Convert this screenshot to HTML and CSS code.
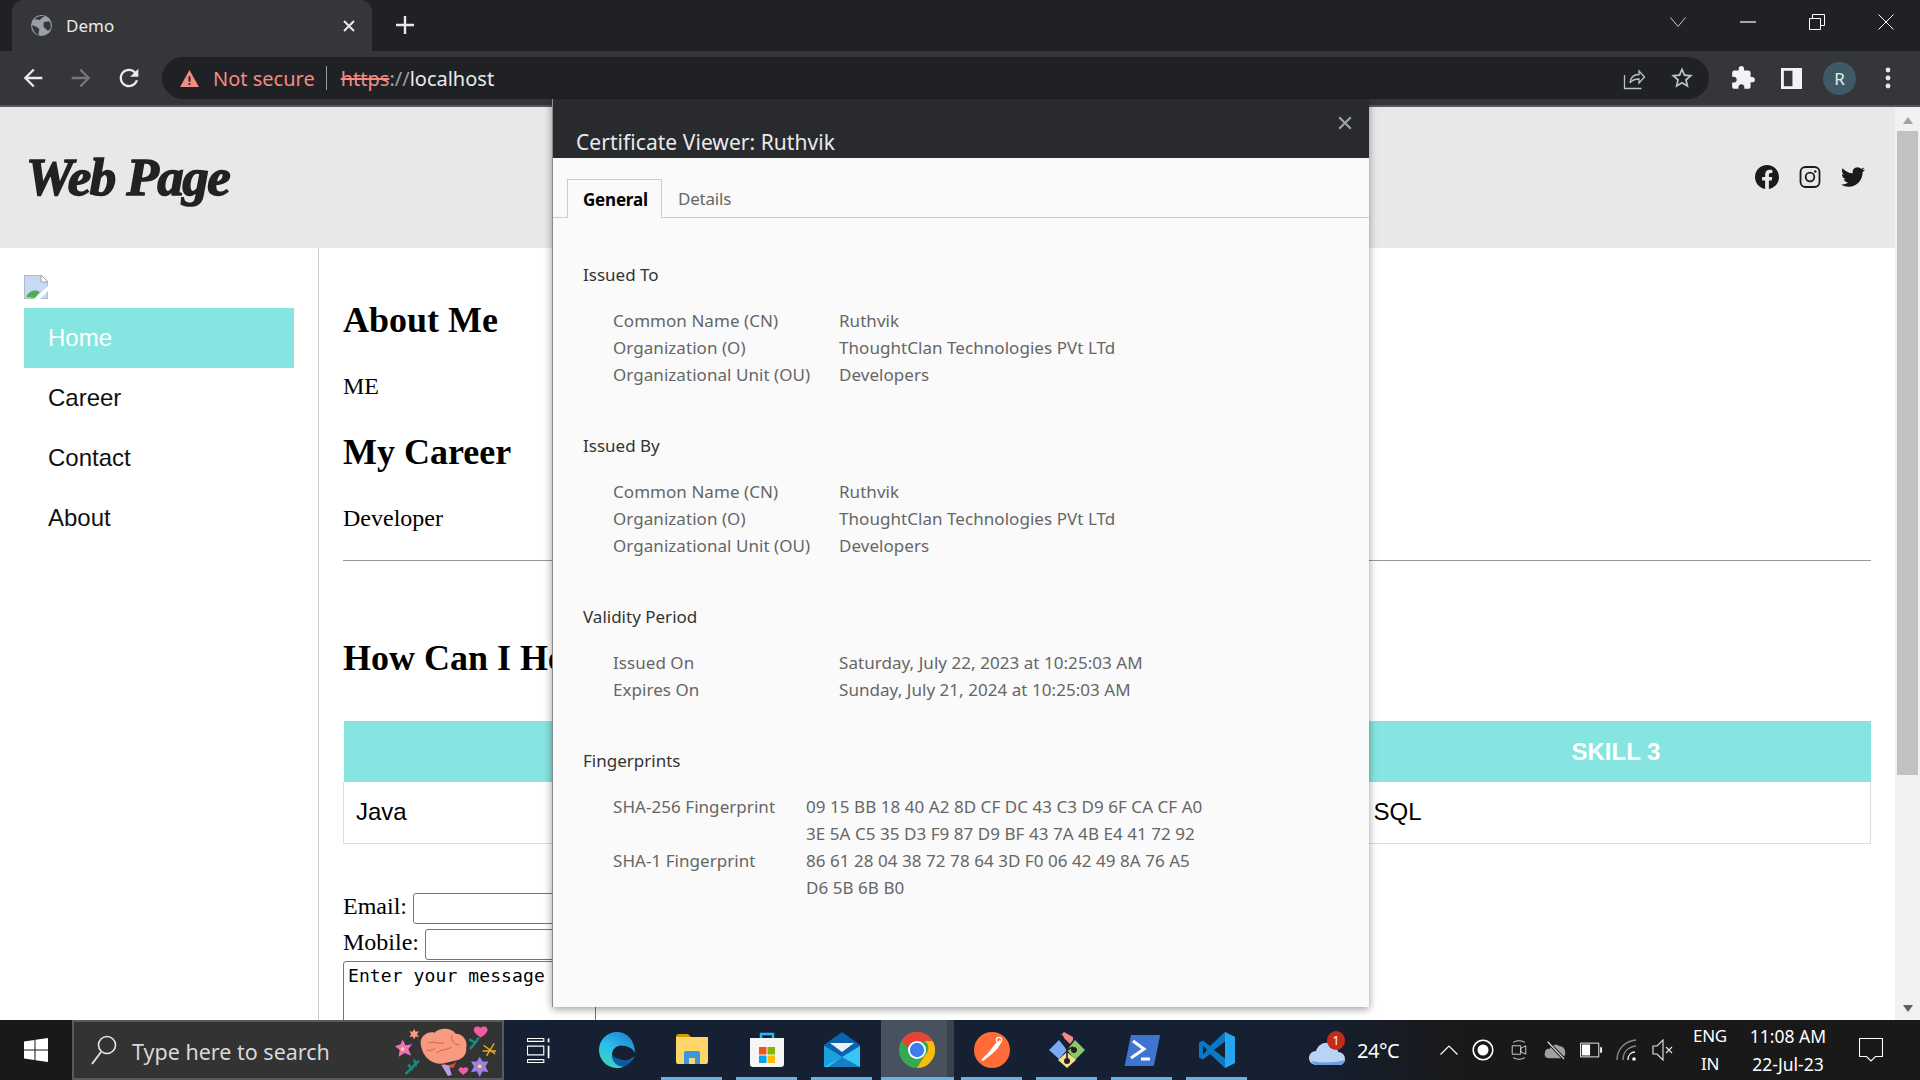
FILE: index.html
```html
<!DOCTYPE html>
<html>
<head>
    <title>Demo</title>
    <link rel="stylesheet" href="styles.css">
</head>
<body>
<div class="screen">

    <!-- browser tabs -->
    <div class="tabstrip">
        <div class="tab">
            <svg class="tab-globe" viewBox="0 0 20 20"><circle cx="10" cy="10" r="10" fill="#9aa0a6"/><path d="M3 4.500c2-1 3.500-.500 5 .500l2-2 3-1.500c-1-.5-2-.5-3-.5-3 0-5.500 1.500-7 3.500zM1 10c2 0 3 .5 4.500 1.500 1 1 2 1 2.500 2.500-.5 1.500-1 2.500-.5 5C4 18 1.500 14.500 1 10zM12 7c2-.5 4-1 6-.5 1 2 1 5 .5 7l-2.500 1.500-2-2-2-1.500z" fill="#35363a"/></svg>
            <span class="tab-title">Demo</span>
            <svg class="tab-close" viewBox="0 0 12 12"><path d="M1 1l10 10M11 1L1 11" stroke="#e8eaed" stroke-width="2"/></svg>
        </div>
        <svg class="tab-new" viewBox="0 0 18 18"><path d="M9 0v18M0 9h18" stroke="#e8eaed" stroke-width="2.400"/></svg>
        <div class="window-btns">
            <svg class="win-chevron" viewBox="0 0 16 10"><path d="M.5.5L8 9.500 15.500.5" fill="none" stroke="#c8c8c8"/></svg>
            <svg class="win-min" viewBox="0 0 16 2"><path d="M0 1h16" stroke="#fff" stroke-width="1.200"/></svg>
            <svg class="win-restore" viewBox="0 0 16 16"><path d="M.5 4.500h11v11H.5zM3.500 4.500v-4h12v11h-4" fill="none" stroke="#fff"/></svg>
            <svg class="win-close" viewBox="0 0 16 16"><path d="M.5.5l15 15M15.500.5l-15 15" stroke="#fff"/></svg>
        </div>
    </div>

    <!-- address bar -->
    <div class="toolbar">
        <svg class="nav-icon" viewBox="0 0 24 24"><path d="M20 11H7.830l5.590-5.590L12 4l-8 8 8 8 1.410-1.410L7.830 13H20v-2z" fill="#e8eaed"/></svg>
        <svg class="nav-icon" viewBox="0 0 24 24"><path d="M4 11h12.170l-5.590-5.590L12 4l8 8-8 8-1.410-1.410L16.170 13H4v-2z" fill="#75777b"/></svg>
        <svg class="nav-icon" viewBox="0 0 24 24"><path d="M17.650 6.350C16.200 4.900 14.210 4 12 4c-4.420 0-7.990 3.580-7.990 8s3.570 8 7.990 8c3.730 0 6.840-2.550 7.730-6h-2.080c-.82 2.330-3.040 4-5.650 4-3.310 0-6-2.690-6-6s2.690-6 6-6c1.660 0 3.140.69 4.220 1.780L13 11h7V4l-2.350 2.350z" fill="#e8eaed"/></svg>
        <div class="omnibox">
            <svg class="warn-icon" viewBox="0 0 20 18"><path d="M10 0l10 18H0z" fill="#f28b82"/><path d="M9 6.500h2v6H9zM9 14h2v2H9z" fill="#202124"/></svg>
            <span class="not-secure">Not secure</span>
            <span class="omni-divider"></span>
            <span class="url"><s class="url-scheme">https</s><span class="url-sep">://</span>localhost</span>
            <svg class="omni-share" viewBox="0 0 24 24"><path d="M2.500 9v13.500h17M8 17c.5-6 4-8.500 9-8.500V5l5.500 6-5.500 6v-4c-4 0-7 1-9 4z" fill="none" stroke="#bdc1c6" stroke-width="1.300"/></svg>
            <svg class="omni-star" viewBox="0 0 24 24"><path d="M22 9.240l-7.190-.62L12 2 9.190 8.630 2 9.240l5.460 4.730L5.820 21 12 17.270 18.180 21l-1.630-7.030L22 9.240zM12 15.400l-3.760 2.270 1-4.280-3.320-2.880 4.380-.38L12 6.100l1.710 4.040 4.380.38-3.320 2.880 1 4.280L12 15.400z" fill="#bdc1c6"/></svg>
        </div>
        <svg class="ext-icon" viewBox="0 0 24 24"><path d="M20.500 11H19V7c0-1.100-.9-2-2-2h-4V3.500C13 2.120 11.880 1 10.500 1S8 2.120 8 3.500V5H4c-1.100 0-1.990.9-1.990 2v3.800H3.500c1.490 0 2.700 1.210 2.700 2.700s-1.210 2.700-2.700 2.700H2V20c0 1.100.9 2 2 2h3.800v-1.500c0-1.490 1.210-2.700 2.700-2.700 1.490 0 2.700 1.210 2.700 2.700V22H17c1.100 0 2-.9 2-2v-4h1.500c1.380 0 2.500-1.120 2.500-2.500S21.880 11 20.500 11z" fill="#f1f3f4"/></svg>
        <svg class="panel-icon" viewBox="0 0 22 22"><path fill-rule="evenodd" d="M0 0h22v22H0zM3 3v16h9V3z" fill="#f1f3f4"/></svg>
        <div class="avatar">R</div>
        <svg class="menu-icon" viewBox="0 0 6 24"><circle cx="3" cy="4" r="2.400" fill="#e8eaed"/><circle cx="3" cy="12" r="2.400" fill="#e8eaed"/><circle cx="3" cy="20" r="2.400" fill="#e8eaed"/></svg>
    </div>

    <!-- the page itself -->
    <div class="viewport">
        <div class="page">
            <header class="site-header">
                <div class="logo">Web Page</div>
                <div class="social">
                    <svg viewBox="0 0 24 24"><path d="M24 12.070C24 5.400 18.630 0 12 0S0 5.400 0 12.070c0 6.030 4.390 11.020 10.130 11.930v-8.440H7.080v-3.490h3.050V9.410c0-3.020 1.790-4.690 4.530-4.690 1.310 0 2.690.24 2.690.24v2.970h-1.510c-1.490 0-1.960.93-1.960 1.890v2.250h3.330l-.53 3.490h-2.800V24C19.610 23.090 24 18.100 24 12.070z" fill="#1a1a1a"/></svg>
                    <svg viewBox="0 0 24 24"><rect x="2.500" y="2" width="19" height="20" rx="5" fill="none" stroke="#1a1a1a" stroke-width="1.800"/><circle cx="12" cy="12" r="4.300" fill="none" stroke="#1a1a1a" stroke-width="1.800"/><circle cx="17.300" cy="6.500" r="1.200" fill="#1a1a1a"/></svg>
                    <svg viewBox="0 0 24 24"><path d="M23.950 4.570a10 10 0 01-2.820.77 4.960 4.960 0 002.160-2.720c-.95.55-2 .95-3.120 1.180a4.920 4.920 0 00-8.380 4.480C7.690 8.090 4.070 6.130 1.640 3.160a4.820 4.820 0 00-.66 2.470c0 1.710.87 3.210 2.190 4.100a4.900 4.900 0 01-2.230-.61v.06c0 2.390 1.700 4.380 3.950 4.830a5 5 0 01-2.210.08 4.940 4.940 0 004.600 3.420A9.870 9.870 0 010 19.540a14 14 0 007.560 2.210c9.050 0 14-7.500 14-13.980 0-.21 0-.42-.02-.63a9.940 9.940 0 002.460-2.550z" fill="#1a1a1a"/></svg>
                </div>
            </header>
            <div class="page-body">
                <aside class="sidebar">
                    <svg class="broken-img" viewBox="0 0 24 24"><path d="M0 0h17l7 7v17H0z" fill="#c9d9f5" stroke="#a0a0a0"/><path d="M17 0v7h7z" fill="#fff" stroke="#a0a0a0"/><path d="M2 22c3-7 10-8 14-5l-5 6z" fill="#4caf50"/><path d="M10 24l14-13v5L16 24z" fill="#fff"/></svg>
                    <nav class="side-nav">
                        <a class="side-link active">Home</a>
                        <a class="side-link">Career</a>
                        <a class="side-link">Contact</a>
                        <a class="side-link">About</a>
                    </nav>
                </aside>
                <main class="content">
                    <h2 class="about-title">About Me</h2>
                    <p class="copy">ME</p>
                    <h2 class="career-title">My Career</h2>
                    <p class="copy">Developer</p>
                    <hr class="rule">
                    <h2 class="help-title">How Can I Help You</h2>
                    <table class="skills">
                        <tr><th>SKILL 1</th><th>SKILL 2</th><th>SKILL 3</th></tr>
                        <tr><td>Java</td><td></td><td>SQL</td></tr>
                    </table>
                    <form class="contact-form">
                        <div class="form-line">Email: <input class="field email-field" type="text"></div>
                        <div class="form-line">Mobile: <input class="field mobile-field" type="text"></div>
                        <textarea class="message" rows="4">Enter your message</textarea>
                    </form>
                </main>
            </div>
        </div>
        <div class="scrollbar">
            <div class="arrow-up"></div>
            <div class="thumb"></div>
            <div class="arrow-down"></div>
        </div>
    </div>

    <!-- certificate dialog -->
    <div class="cert-dialog">
        <div class="cert-head">
            <span class="cert-title">Certificate Viewer: Ruthvik</span>
            <svg class="cert-close" viewBox="0 0 12 12"><path d="M1 1l10 10M11 1L1 11" stroke="#a0a3a8" stroke-width="1.800"/></svg>
        </div>
        <div class="cert-tabs">
            <div class="cert-tab current">General</div>
            <div class="cert-tab">Details</div>
        </div>
        <div class="cert-body">
            <div class="cert-section">
                <h3>Issued To</h3>
                <div class="cert-grid">
                    <span>Common Name (CN)</span><span>Ruthvik</span>
                    <span>Organization (O)</span><span>ThoughtClan Technologies PVt LTd</span>
                    <span>Organizational Unit (OU)</span><span>Developers</span>
                </div>
            </div>
            <div class="cert-section">
                <h3>Issued By</h3>
                <div class="cert-grid">
                    <span>Common Name (CN)</span><span>Ruthvik</span>
                    <span>Organization (O)</span><span>ThoughtClan Technologies PVt LTd</span>
                    <span>Organizational Unit (OU)</span><span>Developers</span>
                </div>
            </div>
            <div class="cert-section">
                <h3>Validity Period</h3>
                <div class="cert-grid">
                    <span>Issued On</span><span>Saturday, July 22, 2023 at 10:25:03 AM</span>
                    <span>Expires On</span><span>Sunday, July 21, 2024 at 10:25:03 AM</span>
                </div>
            </div>
            <div class="cert-section">
                <h3>Fingerprints</h3>
                <div class="cert-grid prints">
                    <span>SHA-256 Fingerprint</span><span>09 15 BB 18 40 A2 8D CF DC 43 C3 D9 6F CA CF A0<br>3E 5A C5 35 D3 F9 87 D9 BF 43 7A 4B E4 41 72 92</span>
                    <span>SHA-1 Fingerprint</span><span>86 61 28 04 38 72 78 64 3D F0 06 42 49 8A 76 A5<br>D6 5B 6B B0</span>
                </div>
            </div>
        </div>
    </div>

    <!-- windows taskbar -->
    <div class="taskbar">
        <div class="start">
            <svg viewBox="0 0 24 24"><path d="M0 3.500l10.500-1.500v9.500H0zM11.500 1.800L24 0v11.500H11.500zM0 12.500h10.500V22L0 20.500zM11.500 12.500H24V24l-12.500-1.800z" fill="#fff"/></svg>
        </div>
        <div class="search">
            <svg class="search-icon" viewBox="0 0 26 30"><circle cx="16" cy="10" r="8.500" fill="none" stroke="#e6e6e6" stroke-width="1.600"/><path d="M10 17L1 29" stroke="#e6e6e6" stroke-width="1.800"/></svg>
            <span class="search-text">Type here to search</span>
            <svg class="doodle" viewBox="0 0 110 56">
                <path d="M30 22c-2-10 8-15 14-13 6-6 18-5 22 1 8 0 13 8 11 15 1 8-6 13-12 13l-12 3c-8 1-20-3-23-19z" fill="#f79a80"/>
                <path d="M38 20c6-3 10 2 16-1M46 30c5-4 12-3 16-6M62 12c-1 6 3 9 8 10M36 27c4 1 7 0 9-2" fill="none" stroke="#d9593f"/>
                <path d="M52 40c4 4 12 3 15-2l-3 7-8 1z" fill="#ef4b2a"/>
                <path d="M51 42l7 12 4-1-3-10z" fill="#b9a0e6"/>
                <path d="M11 16l3 6 7-1-4 5 3 7-7-3-6 4 1-7-5-4 6-2z" fill="#ee6fc0"/><circle cx="11" cy="26" r="2" fill="#f5e642"/>
                <path d="M91 34l3 5 6 0-3 5 3 6-6-1-3 6-3-6-6 1 3-6-3-5 6 0z" fill="#9d7fe6"/><circle cx="91" cy="44" r="2" fill="#f5e642"/>
                <path d="M23 5l1.500 3 3.500-.5-2 3 2 3-3.500-.5-1.500 3-1.500-3-3.500.5 2-3-2-3 3.500.5z" fill="#f79a80"/>
                <path d="M92 4c3-3 8-1 7 3-1 3-4 5-7 7-3-2-6-4-7-7-1-4 4-6 7-3z" fill="#f25ca2"/>
                <path d="M90 14c-3 6-7 9-9 12M80 16l6 3" stroke="#13907c" stroke-width="2.500" fill="none"/>
                <path d="M14 52l14-14M17 42l4 6M23 37l2 7" stroke="#13907c" stroke-width="2.500" fill="none"/>
                <path d="M95 22l12 9M106 20l-8 13M94 28h14" stroke="#eca820" stroke-width="1.500"/>
                <path d="M74 46c2-2 6-1 5 2-1 2-3 3-5 5-2-2-4-3-5-5 0-3 3-4 5-2z" fill="#f25ca2"/>
            </svg>
        </div>
        <div class="apps">
            <div class="app-cell">
                <svg class="taskview" viewBox="0 0 24 26"><path d="M.5 4V.5h17V4M.5 8.500h17v9H.5zM.5 22v3.500h17V22M1 3.500h16M1 22.500h16" fill="none" stroke="#fff" stroke-width="1.200"/><path d="M22.500.5v4M22.500 8v13" stroke="#fff" stroke-width="1.800"/></svg>
            </div>
            <div class="app-cell">
                <svg viewBox="0 0 36 36">
                    <defs>
                        <linearGradient id="edgeRing" x1="0.8" y1="0" x2="0.2" y2="1">
                            <stop offset="0" stop-color="#1b84d6"/>
                            <stop offset="0.55" stop-color="#2dc0ea"/>
                            <stop offset="1" stop-color="#3ed6b8"/>
                        </linearGradient>
                    </defs>
                    <path d="M18 0C8 0 0 8 0 18c0 10 8 18 18 18 2 0 5-.5 7-1.500-6 0-12-4-12-12 0-5 4-9 9-9 6 0 13 3 14 8C36 8 28 0 18 0z" fill="url(#edgeRing)"/>
                    <path d="M13 23c0 7 6 12 12 11.500 5-2 9-5.500 10.500-10-3 3-8 4.500-12 3.500-5-1-8.500-3-10.500-5z" fill="#0c59a4"/>
                    <path d="M35.500 24.500c-3 3-8 4.500-12 3.500 3 .5 7 0 9-1 1.500-1 2.500-1.500 3-2.500z" fill="#52d66a"/>
                </svg>
            </div>
            <div class="app-cell running">
                <svg viewBox="0 0 36 36"><path d="M2 5q0-3 3-3h9l3 3h-15z" fill="#d99a00"/><path d="M2 5h32v25q0 2-2 2H4q-2 0-2-2z" fill="#fdd667"/><path d="M10 32V21q0-2 2-2h12q2 0 2 2v11h-5v-6h-6v6z" fill="#3a96dd"/><path d="M15 26h6v6h-6z" fill="#fdd667"/></svg>
            </div>
            <div class="app-cell running">
                <svg viewBox="0 0 36 36"><path d="M12 8V2h12v6" fill="none" stroke="#29b6f6" stroke-width="2.500"/><path d="M1 6h34v26q0 3-3 3H4q-3 0-3-3z" fill="#f5f5f5"/><path d="M10 15h7.500v7.500H10z" fill="#f25022"/><path d="M18.500 15H26v7.500h-7.500z" fill="#7fba00"/><path d="M10 23.500h7.500V31H10z" fill="#00a4ef"/><path d="M18.500 23.500H26V31h-7.500z" fill="#ffb900"/></svg>
            </div>
            <div class="app-cell running">
                <svg viewBox="0 0 36 36"><path d="M0 13L18 0l18 13v20H0z" fill="#0a64ad"/><path d="M6 11h24l-12 9z" fill="#f1f1f1"/><path d="M0 14l18 11 18-11v21H0z" fill="#38c6f4"/><path d="M0 35V14l18 11z" fill="#1ba1e2"/><path d="M36 35H4l14-10z" fill="#1580c5"/></svg>
            </div>
            <div class="app-cell active">
                <svg viewBox="0 0 36 36">
                    <circle cx="18" cy="18" r="18" fill="#34a853"/>
                    <path d="M2.400 9A18 18 0 0 1 33.600 9H18a9 9 0 0 0-8.800 7z" fill="#ea4335"/>
                    <path d="M33.600 9A18 18 0 0 1 18 36l8-13a9 9 0 0 0 0-14z" fill="#fbbc05"/>
                    <circle cx="18" cy="18" r="9" fill="#fff"/><circle cx="18" cy="18" r="7.200" fill="#3b7ded"/>
                </svg>
            </div>
            <div class="app-cell running">
                <svg viewBox="0 0 36 36"><circle cx="18" cy="18" r="18" fill="#ff6c37"/><path d="M7 28l8-8 3 2-9 7zM15 20l6-8 3 4-6 6zM21 12l5-4 1 3-3 5z" fill="#fff"/><circle cx="25" cy="8" r="2.600" fill="none" stroke="#fff" stroke-width="1.300"/></svg>
            </div>
            <div class="app-cell running">
                <svg viewBox="0 0 36 36"><path d="M18 9l-6-6 3-3 9 5 0 3-3 4z" fill="#f08a8a"/><path d="M10 8l8 10-8 9-10-9z" fill="#7aa9f5"/><path d="M26 8l10 10-10 10-8-10z" fill="#8cc76a"/><path d="M18 20l9 8-9 8-9-8z" fill="#f6df86"/><path d="M13 3l5 15v9M18 18l6-3" stroke="#222" stroke-width="1.600" fill="none"/><circle cx="18" cy="29" r="3" fill="#222"/><circle cx="25" cy="18" r="3" fill="#222"/></svg>
            </div>
            <div class="app-cell running">
                <svg viewBox="0 0 36 36"><path d="M7 3h28q1 0 1 1l-6 29q0 1-2 1H2q-2 0-1-2z" fill="#3e75d0"/><path d="M9 9l11 8-13 9" fill="none" stroke="#fff" stroke-width="3"/><path d="M17 27h9" stroke="#fff" stroke-width="3"/></svg>
            </div>
            <div class="app-cell running">
                <svg viewBox="0 0 36 36"><path d="M26 0l10 5v26l-10 5-15-14-7 5.500L0 25.500V10.500l4-2L11 14z" fill="#0a78c6"/><path d="M26 0l10 5v26l-10 5z" fill="#26a6ee"/><path d="M26 9.500L15 18l11 8.500z" fill="#16212e"/><path d="M4 13.500L8 18l-4 4.500z" fill="#16212e"/></svg>
            </div>
        </div>
        <div class="tray">
            <div class="weather">
                <svg viewBox="0 0 36 24"><path d="M8 24C2 24 0 20 0 17c0-4 3-7 7-7 2-6 7-9 13-8 6 1 9 6 9 9 4 0 7 3 7 7s-3 6-6 6z" fill="#b9d3f5"/><path d="M2 20c2 3 4 4 6 4h22c3 0 5-2 6-5-8 3-26 3-34 1z" fill="#6f9ee0"/></svg>
                <span class="badge">1</span>
                <span class="temp">24°C</span>
            </div>
            <div class="tray-icons">
                <svg viewBox="0 0 18 10"><path d="M.5 9.500L9 1l8.500 8.500" fill="none" stroke="#fff" stroke-width="1.200"/></svg>
                <svg class="tray-big" viewBox="0 0 22 22"><circle cx="11" cy="11" r="9.800" fill="none" stroke="#fff" stroke-width="1.600"/><circle cx="11" cy="11" r="5.500" fill="#fff"/></svg>
                <svg class="tray-big" viewBox="0 0 18 26"><path d="M1 8h10v10H1zM11 11l6-3v10l-6-3z" fill="none" stroke="#e6e6e6"/><path d="M2 4q7-4 14 0M2 22q7 4 14 0" fill="none" stroke="#e6e6e6"/></svg>
                <svg class="tray-big" viewBox="0 0 24 22"><path d="M6 20C1 20 0 16 1 14c0-3 3-5 5-4 2-5 8-6 11-3 4 0 6 3 6 6 1 4-2 7-5 7z" fill="#a0a0a0"/><path d="M4 2l18 19" stroke="#191919" stroke-width="3.500"/><path d="M4 2l18 19" stroke="#e6e6e6" stroke-width="1.200"/></svg>
                <svg class="tray-big" viewBox="0 0 24 16"><path d="M.5.5h20v15H.5z" fill="none" stroke="#fff"/><path d="M2 2h9v12H2z" fill="#fff"/><path d="M22 5h2v6h-2z" fill="#fff"/></svg>
                <svg class="tray-big" viewBox="0 0 22 22"><path d="M1 21C1 10 9 2 20 1M7 21C7 13 12 8 20 7" fill="none" stroke="#8a8a8a" stroke-width="1.400"/><path d="M12 21c0-5 3-8 7-8" fill="none" stroke="#e6e6e6" stroke-width="1.400"/><circle cx="18" cy="20" r="1.800" fill="#fff"/></svg>
                <svg class="tray-big" viewBox="0 0 22 22"><path d="M1 7h4l6-6v20l-6-6H1z" fill="none" stroke="#e6e6e6" stroke-width="1.100"/><path d="M14 8l6 6M20 8l-6 6" stroke="#e6e6e6" stroke-width="1.100"/></svg>
            </div>
            <div class="lang"><span>ENG</span><span>IN</span></div>
            <div class="clock"><span>11:08 AM</span><span>22-Jul-23</span></div>
            <div class="notify">
                <svg viewBox="0 0 24 24"><path d="M.5.500h23v18h-7l-4.500 4.500-4.500-4.500h-7z" fill="none" stroke="#fff" stroke-width="1.100"/></svg>
            </div>
        </div>
    </div>
</div>
</body>
</html>
```

FILE: styles.css
```css
* {
    box-sizing: border-box;
}

body {
    margin: 0;
    font-family: "Liberation Sans", Arial, sans-serif;
    overflow: hidden;
}

svg {
    display: block;
    flex: none;
}

.screen {
    position: relative;
    width: 1920px;
    height: 1080px;
    display: flex;
    flex-direction: column;
    overflow: hidden;
}

/* tab strip */
.tabstrip {
    height: 51px;
    background-color: #202124;
    display: flex;
    align-items: flex-start;
    flex: none;
}

.tab {
    width: 360px;
    height: 51px;
    margin-left: 12px;
    padding: 0 18px 0 19px;
    background-color: #35363a;
    border-radius: 12px 12px 0 0;
    display: flex;
    align-items: center;
}

.tab-globe {
    width: 21px;
    height: 21px;
}

.tab-title {
    margin-left: 14px;
    flex: 1;
    color: #e8eaed;
    font: 17px "Noto Sans", sans-serif;
}

.tab-close {
    width: 12px;
    height: 12px;
    margin-right: -1px;
}

.tab-new {
    width: 18px;
    height: 18px;
    margin: 16px 0 0 24px;
}

.window-btns {
    margin-left: auto;
    display: flex;
    align-items: center;
    height: 44px;
}

.win-chevron {
    width: 16px;
    height: 10px;
    margin-right: 54px;
}

.win-min {
    width: 16px;
    height: 2px;
    margin-right: 53px;
}

.win-restore {
    width: 16px;
    height: 16px;
    margin-right: 53px;
}

.win-close {
    width: 16px;
    height: 16px;
    margin-right: 26px;
}

/* toolbar */
.toolbar {
    height: 56px;
    background-color: #35363a;
    border-bottom: 2px solid #55565a;
    display: flex;
    align-items: center;
    flex: none;
}

.nav-icon {
    width: 28px;
    height: 28px;
    margin-left: 20px;
}

.nav-icon:first-child {
    margin-left: 19px;
}

.omnibox {
    width: 1547px;
    height: 42px;
    margin-left: 19px;
    padding: 0 14px 0 18px;
    background-color: #202124;
    border-radius: 21px;
    display: flex;
    align-items: center;
    font: 20px "Noto Sans", sans-serif;
}

.warn-icon {
    width: 19px;
    height: 17px;
}

.not-secure {
    margin-left: 14px;
    color: #f28b82;
    font-size: 20px;
}

.omni-divider {
    width: 1px;
    height: 24px;
    margin: 0 14px 0 11px;
    background-color: #9aa0a6;
}

.url {
    color: #e8eaed;
}

.url-scheme {
    color: #f28b82;
}

.url-sep {
    color: #9aa0a6;
}

.omni-share {
    width: 24px;
    height: 24px;
    margin-left: auto;
}

.omni-star {
    width: 26px;
    height: 26px;
    margin-left: 23px;
}

.ext-icon {
    width: 26px;
    height: 26px;
    margin-left: 21px;
}

.panel-icon {
    width: 21px;
    height: 21px;
    margin-left: 25px;
}

.avatar {
    width: 33px;
    height: 33px;
    margin-left: 21px;
    border-radius: 50%;
    background-color: #3f5a67;
    color: #e8eaed;
    font: 17px "Noto Sans", sans-serif;
    display: flex;
    align-items: center;
    justify-content: center;
}

.menu-icon {
    width: 6px;
    height: 24px;
    margin-left: 29px;
}

/* page */
.viewport {
    flex: 1;
    display: flex;
    min-height: 0;
    background-color: #fff;
}

.page {
    flex: 1;
    min-width: 0;
    display: flex;
    flex-direction: column;
    overflow: hidden;
}

.site-header {
    height: 141px;
    flex: none;
    background-color: #e8e8e8;
    display: flex;
    justify-content: space-between;
    padding: 0 30px 0 26px;
}

.logo {
    margin-top: 40px;
    color: #222;
    font: italic bold 53px "Liberation Serif", serif;
    -webkit-text-stroke: 1.5px #222;
    letter-spacing: -1.5px;
}

.social {
    display: flex;
    gap: 19px;
    margin-top: 58px;
}

.social svg {
    width: 24px;
    height: 24px;
}

.page-body {
    flex: 1;
    display: flex;
    min-height: 0;
}

.sidebar {
    width: 319px;
    flex: none;
    padding: 27px 24px 0;
    border-right: 1px solid #ccc;
}

.broken-img {
    width: 24px;
    height: 24px;
    margin-bottom: 9px;
}

.side-link {
    display: block;
    height: 60px;
    line-height: 60px;
    padding-left: 24px;
    color: #111;
    font-size: 24px;
}

.side-link.active {
    background-color: #86e5e1;
    color: #fff;
}

.content {
    flex: 1;
    min-width: 0;
    padding: 52px 24px 0;
    font-family: "Liberation Serif", serif;
}

.content h2 {
    margin: 0;
    font-size: 36px;
    line-height: 41px;
}

.copy {
    margin: 31px 0 0;
    font-size: 24px;
    line-height: 28px;
}

.content .career-title {
    margin-top: 32px;
}

.rule {
    margin: 28px 0 0;
    border: 0;
    border-top: 1px solid #999;
}

.content .help-title {
    margin-top: 77px;
}

.skills {
    width: 100%;
    margin-top: 42px;
    border-collapse: collapse;
    table-layout: fixed;
    font-family: "Liberation Sans", sans-serif;
}

.skills th {
    height: 61px;
    background-color: #86e5e1;
    color: #fff;
    font-size: 24px;
}

.skills td {
    height: 61px;
    padding-left: 12px;
    font-size: 24px;
    border-bottom: 1px solid #ddd;
}

.skills tr td:first-child {
    border-left: 1px solid #ddd;
}

.skills tr td:last-child {
    border-right: 1px solid #ddd;
}

.contact-form {
    margin-top: 49px;
    font-size: 24px;
}

.form-line {
    height: 36px;
}

.field {
    height: 31px;
    width: 340px;
    border: 1px solid #767676;
    border-radius: 3px;
    vertical-align: top;
}

.message {
    display: block;
    width: 253px;
    height: 120px;
    margin-top: -4px;
    padding: 3px 4px;
    font: 18px "DejaVu Sans Mono", monospace;
    letter-spacing: 0.1px;
    border: 1px solid #767676;
    border-radius: 3px;
    resize: none;
}

.scrollbar {
    width: 25px;
    flex: none;
    background-color: #f1f1f1;
    display: flex;
    flex-direction: column;
    align-items: center;
}

.arrow-up {
    margin-top: 10px;
    border: 5.5px solid transparent;
    border-top: 0;
    border-bottom: 7px solid #a3a3a3;
}

.thumb {
    width: 21px;
    height: 644px;
    margin-top: 7px;
    background-color: #c1c1c1;
}

.arrow-down {
    margin-top: auto;
    margin-bottom: 8px;
    border: 5.5px solid transparent;
    border-bottom: 0;
    border-top: 7px solid #5f5f5f;
}

/* certificate viewer, sits over the page */
.cert-dialog {
    position: absolute;
    left: 552px;
    top: 99px;
    width: 817px;
    height: 908px;
    background-color: #fafafa;
    border-left: 1px solid #8a8a8a;
    box-shadow: 0 2px 8px rgba(0, 0, 0, 0.4);
    font-family: "Noto Sans", sans-serif;
}

.cert-head {
    height: 59px;
    padding: 0 17px 1px 23px;
    background-color: #292a2d;
    display: flex;
    justify-content: space-between;
    align-items: flex-end;
}

.cert-title {
    color: #e8eaed;
    font-size: 21px;
    line-height: 30px;
    letter-spacing: 0.05px;
}

.cert-close {
    width: 14px;
    height: 14px;
    align-self: flex-start;
    margin-top: 17px;
}

.cert-tabs {
    height: 60px;
    padding: 21px 0 0 14px;
    border-bottom: 1px solid #ccc;
    display: flex;
}

.cert-tab {
    height: 39px;
    padding: 0 0 0 16px;
    color: #666;
    font-size: 17px;
    line-height: 39px;
    letter-spacing: -0.2px;
}

.cert-tab.current {
    width: 95px;
    padding-left: 15px;
    color: #000;
    font-weight: bold;
    background-color: #fafafa;
    border: 1px solid #ccc;
    border-bottom: 0;
}

.cert-body {
    padding: 43px 0 0 30px;
}

.cert-section {
    margin-bottom: 44px;
}

.cert-section h3 {
    margin: 0 0 19px;
    color: #333;
    font-size: 17px;
    font-weight: normal;
    line-height: 27px;
}

.cert-grid {
    padding-left: 30px;
    display: grid;
    grid-template-columns: 226px 1fr;
    color: #666;
    font-size: 17px;
    line-height: 27px;
    letter-spacing: 0.05px;
}

.cert-grid.prints {
    grid-template-columns: 193px 1fr;
}

/* taskbar */
.taskbar {
    height: 60px;
    flex: none;
    background: linear-gradient(to right, #191919 72px, #152033 504px, #152033 1300px, #191919 1460px);
    display: flex;
    color: #fff;
    font-family: "Noto Sans", sans-serif;
}

.start {
    width: 72px;
    background-color: #191919;
    display: flex;
    align-items: center;
    justify-content: center;
}

.start svg {
    width: 24px;
    height: 24px;
}

.search {
    width: 432px;
    background-color: #333;
    border: 2px solid #5a5a5a;
    display: flex;
    align-items: center;
    padding-left: 17px;
    position: relative;
}

.search-icon {
    width: 26px;
    height: 30px;
}

.search-text {
    margin-left: 15px;
    padding-top: 2px;
    color: #d8d8d8;
    font-size: 21.5px;
}

.doodle {
    position: absolute;
    right: 3px;
    top: 2px;
    width: 108px;
    height: 54px;
}

.apps {
    display: flex;
    width: 751px;
}

.app-cell {
    width: 75px;
    display: flex;
    align-items: center;
    justify-content: center;
    position: relative;
}

.app-cell svg {
    width: 36px;
    height: 36px;
}

.app-cell .taskview {
    width: 23px;
    height: 25px;
    margin-right: 6px;
}

.app-cell.running::after,
.app-cell.active::after {
    content: "";
    position: absolute;
    left: 7px;
    right: 7px;
    bottom: 0;
    height: 3px;
    background-color: #6cb0e0;
}

.app-cell.active {
    background: linear-gradient(to right, transparent 2px, #48525f 2px, #48525f 68px, #39414e 68px);
}

.app-cell.active::after {
    left: 2px;
    right: 0;
}

.tray {
    flex: 1;
    display: flex;
    align-items: center;
}

.weather {
    position: relative;
    width: 176px;
    padding-left: 54px;
    display: flex;
    align-items: center;
}

.weather svg {
    width: 36px;
    height: 24px;
    margin-top: 6px;
}

.badge {
    position: absolute;
    left: 72px;
    top: -4px;
    width: 18px;
    height: 19px;
    border-radius: 50%;
    background-color: #c42b1c;
    font-size: 12px;
    line-height: 19px;
    text-align: center;
}

.temp {
    margin-left: 12px;
    font-size: 20px;
    letter-spacing: -0.5px;
}

.tray-icons {
    width: 251px;
    display: flex;
    align-items: center;
    justify-content: space-between;
    padding: 0 8px 0 9px;
}

.tray-icons svg {
    width: 18px;
    height: 12px;
}

.tray-icons .tray-big {
    width: 22px;
    height: 22px;
}

.lang,
.clock {
    display: flex;
    flex-direction: column;
    align-items: center;
    font-size: 17.5px;
    line-height: 28px;
}

.lang {
    width: 56px;
    font-size: 17px;
    letter-spacing: -0.3px;
}

.clock {
    width: 100px;
}

.notify {
    width: 66px;
    display: flex;
    justify-content: center;
}

.notify svg {
    width: 24px;
    height: 24px;
}
```
